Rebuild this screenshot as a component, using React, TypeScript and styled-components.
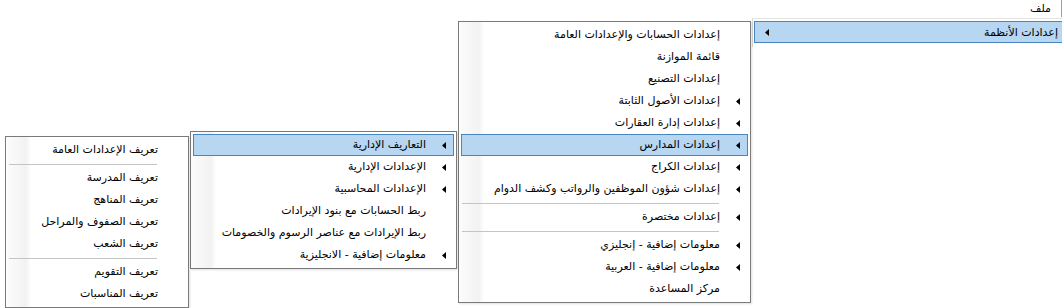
import React from "react";
import styled, { createGlobalStyle } from "styled-components";

const GlobalStyle = createGlobalStyle`
  html, body {
    margin: 0;
    padding: 0;
    background: #ffffff;
  }
  body {
    font-family: "DejaVu Sans", "Noto Sans", sans-serif;
    font-size: 11px;
    color: #000;
  }
`;

type Entry =
  | { kind: "item"; label: string; sub?: boolean; active?: boolean }
  | { kind: "sep" };

const item = (label: string, sub = false, active = false): Entry => ({
  kind: "item",
  label,
  sub,
  active,
});
const sep: Entry = { kind: "sep" };

const systemsMenu: Entry[] = [
  item("إعدادات الحسابات والإعدادات العامة"),
  item("قائمة الموازنة"),
  item("إعدادات التصنيع"),
  item("إعدادات الأصول الثابتة", true),
  item("إعدادات إدارة العقارات", true),
  item("إعدادات المدارس", true, true),
  item("إعدادات الكراج", true),
  item("إعدادات شؤون الموظفين والرواتب وكشف الدوام", true),
  sep,
  item("إعدادات مختصرة", true),
  sep,
  item("معلومات إضافية - إنجليزي", true),
  item("معلومات إضافية - العربية", true),
  item("مركز المساعدة"),
];

const schoolsMenu: Entry[] = [
  item("التعاريف الإدارية", true, true),
  item("الإعدادات الإدارية", true),
  item("الإعدادات المحاسبية", true),
  item("ربط الحسابات مع بنود الإيرادات"),
  item("ربط الإيرادات مع عناصر الرسوم والخصومات"),
  item("معلومات إضافية - الانجليزية", true),
];

const definitionsMenu: Entry[] = [
  item("تعريف الإعدادات العامة"),
  sep,
  item("تعريف المدرسة"),
  item("تعريف المناهج"),
  item("تعريف الصفوف والمراحل"),
  item("تعريف الشعب"),
  sep,
  item("تعريف التقويم"),
  item("تعريف المناسبات"),
];

// small black "submenu" triangle, pointing left
const SubArrow = () => (
  <svg width="4" height="7" viewBox="0 0 4 7">
    <polygon points="4,0 4,7 0,3.5" fill="#000" />
  </svg>
);

function Menu({
  entries,
  x,
  y,
  w,
}: {
  entries: Entry[];
  x: number;
  y: number;
  w: number;
}) {
  return (
    <Popup $x={x} $y={y} $w={w}>
      {entries.map((e, i) =>
        e.kind === "sep" ? (
          <Separator key={i} />
        ) : (
          <Item key={i} $active={e.active}>
            <ArrowSlot>{e.sub && <SubArrow />}</ArrowSlot>
            <Label>{e.label}</Label>
          </Item>
        )
      )}
    </Popup>
  );
}

export default function App() {
  return (
    <>
      <GlobalStyle />
      <Screen>
        <MenuBar>
          <BarItem>ملف</BarItem>
        </MenuBar>

        <TopPopup>
          <TopItem>
            <span>إعدادات الأنظمة</span>
            <SubArrow />
          </TopItem>
        </TopPopup>

        <Menu entries={systemsMenu} x={458} y={21} w={293} />
        <Menu entries={schoolsMenu} x={190} y={131} w={267} />
        <Menu entries={definitionsMenu} x={5} y={136} w={184} />
      </Screen>
    </>
  );
}

const Screen = styled.div`
  position: relative;
  width: 1062px;
  height: 308px;
  overflow: hidden;
  direction: rtl;
  background: #fff;
`;

const MenuBar = styled.div`
  display: flex;
  height: 17px;
`;

const BarItem = styled.div`
  display: flex;
  align-items: center;
  height: 17px;
  padding: 0 10px 0 11px;
  box-sizing: border-box;
  border-right: 1px solid #a0a0a0;
`;

const Popup = styled.div<{ $x: number; $y: number; $w: number }>`
  position: absolute;
  left: ${(p) => p.$x}px;
  top: ${(p) => p.$y}px;
  width: ${(p) => p.$w}px;
  box-sizing: border-box;
  padding: 2px 0;
  display: flex;
  flex-direction: column;
  border: 1px solid #7a7a7a;
  background: linear-gradient(
      to right,
      #ffffff 0px,
      #fbfbfb 2px,
      #f2f2f2 20px,
      #fafafa 23px,
      #ffffff 25px
    )
    no-repeat;
  box-shadow: 1px 1px 2px rgba(0, 0, 0, 0.12);
`;

const TopPopup = styled.div`
  position: absolute;
  left: 752px;
  top: 18px;
  width: 320px;
  height: 29px;
  box-sizing: border-box;
  padding: 2px 0 0 1px;
  background: #fff;
  border-left: 1px solid #d8d8d8;
  border-top: 1px solid #e4e4e4;
`;

const Item = styled.div<{ $active?: boolean }>`
  display: flex;
  align-items: center;
  height: 22px;
  margin: 0 2px;
  padding-right: 7px;
  box-sizing: border-box;
  white-space: nowrap;
  border: 1px solid ${(p) => (p.$active ? "#4a86be" : "transparent")};
  background: ${(p) => (p.$active ? "#b6d6f2" : "transparent")};
`;

const TopItem = styled.div`
  display: flex;
  align-items: center;
  justify-content: space-between;
  height: 22px;
  padding: 0 13px 0 10px;
  box-sizing: border-box;
  white-space: nowrap;
  border: 1px solid #4a86be;
  background: #b6d6f2;
`;

const ArrowSlot = styled.span`
  display: flex;
  align-items: center;
  width: 4px;
  height: 7px;
`;

const Label = styled.span`
  margin-right: 16px;
  line-height: 20px;
`;

const Separator = styled.div`
  height: 6px;
  margin: 0 31px 0 3px;
  display: flex;
  align-items: center;
  &::after {
    content: "";
    display: block;
    width: 100%;
    height: 1px;
    background: #c4c4c4;
  }
`;
